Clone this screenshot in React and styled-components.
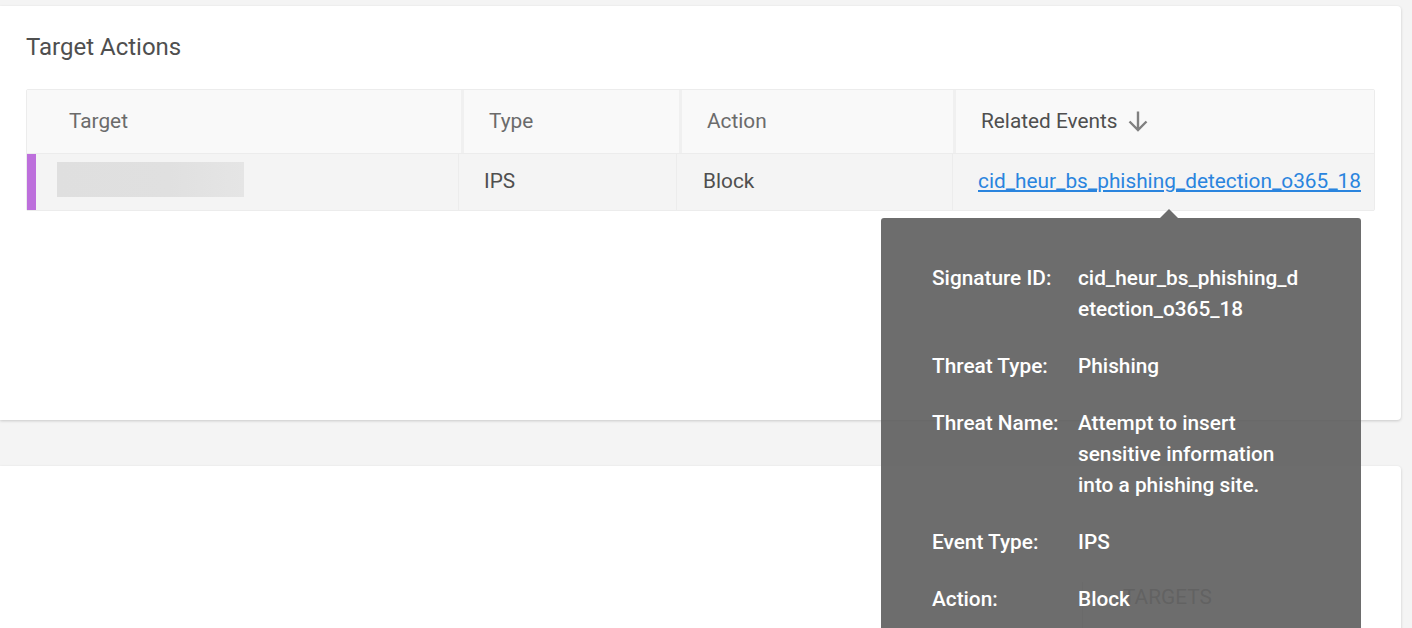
import React from "react";
import styled, { createGlobalStyle } from "styled-components";

const Global = createGlobalStyle`
  html, body { margin: 0; padding: 0; height: 628px; overflow: hidden; background: #f4f4f4; }
  body { font-family: Roboto, "Liberation Sans", sans-serif; }
`;

const Page = styled.div`
  display: flex;
  flex-direction: column;
  gap: 46px;
  padding: 6px 11px 0 0;
  height: 628px;
  box-sizing: border-box;
`;

const Card = styled.section`
  background: #fff;
  border-radius: 0 4px 4px 0;
  box-shadow: 0 1px 3px rgba(0, 0, 0, 0.18);
  box-sizing: border-box;
`;

const ActionsCard = styled(Card)`
  flex: none;
  height: 414px;
  padding: 26px 26px 0;
`;

const Title = styled.h2`
  margin: 0 0 27px;
  font-size: 24px;
  line-height: 30px;
  font-weight: 400;
  color: #4f4f4f;
`;

const Table = styled.div`
  position: relative;
  border: 1px solid #ececec;
  border-radius: 2px;
  width: 1349px;
  box-sizing: border-box;
`;

const HeaderRow = styled.div`
  display: grid;
  grid-template-columns: 437px 218px 274px 1fr;
  height: 63px;
  background: #f9f9f9;
  border-bottom: 1px solid #ececec;
`;

const HeaderCell = styled.div`
  display: flex;
  align-items: center;
  gap: 10px;
  padding-left: ${(p) => p.$indent}px;
  padding-bottom: 2px;
  border-right: ${(p) => (p.$last ? "0" : "3px solid #f0f0f0")};
  font-size: 20.8px;
  color: ${(p) => (p.$active ? "#4f4f4f" : "#6b6b6b")};
`;

const DataRow = styled.div`
  display: grid;
  grid-template-columns: 432px 218px 276px 1fr;
  height: 56px;
  background: #f4f4f4;
  font-size: 20.8px;
  color: #4f4f4f;
  box-shadow: 0 1px 0 #ececec;
`;

const DataCell = styled.div`
  display: flex;
  align-items: center;
  padding-left: ${(p) => p.$indent}px;
  padding-bottom: 2px;
  border-right: ${(p) => (p.$last ? "0" : "1px solid #ececec")};
`;

const TargetCell = styled(DataCell)`
  padding: 0;
  align-items: stretch;
`;

const Severity = styled.div`
  width: 9px;
  background: #bd6fdc;
`;

const Redacted = styled.div`
  width: 187px;
  height: 35px;
  margin: 8px 0 0 21px;
  background: linear-gradient(90deg, #dfdfdf 0%, #e0e0e0 60%, #e5e5e5 100%);
`;

const EventLink = styled.a`
  color: #2a84de;
  text-decoration: underline;
  white-space: nowrap;
`;

const Tooltip = styled.div`
  position: absolute;
  top: 128px;
  left: 854px;
  width: 480px;
  height: 460px;
  box-sizing: border-box;
  padding: 45px 54px 0 51px;
  background: rgba(93, 93, 93, 0.9);
  border-radius: 3px;
  z-index: 2;
  color: #fff;
  font-size: 20.8px;
  font-weight: 500;
  line-height: 31px;

  &::before {
    content: "";
    position: absolute;
    top: -9px;
    left: 279px;
    border-left: 9px solid transparent;
    border-right: 9px solid transparent;
    border-bottom: 9px solid #6d6d6d;
  }
`;

const TipRow = styled.div`
  display: grid;
  grid-template-columns: 146px 1fr;
  margin-bottom: 26px;
`;

const TipValue = styled.div`
  word-break: break-all;
`;

const TipWrapValue = styled.div`
  overflow-wrap: normal;
`;

const LowerCard = styled(Card)`
  flex: none;
  height: 200px;
  display: flex;
  justify-content: flex-start;
  padding: 116px 0 0 1082px;
`;

const Divider = styled.div`
  width: 1px;
  background: #e0e0e0;
  height: 100px;
`;

const SectionLabel = styled.div`
  margin-left: 40px;
  font-size: 20.8px;
  line-height: 30px;
  color: #8a8a8a;
`;

const ArrowDown = () => (
  <svg width="22" height="22" viewBox="0 0 22 22" fill="none" stroke="#808080" strokeWidth="2.4">
    <path d="M11 1.5v18M2.5 11.5l8.5 8.5 8.5-8.5" />
  </svg>
);

export default function App() {
  return (
    <>
      <Global />
      <Page>
        <ActionsCard>
          <Title>Target Actions</Title>
          <Table>
            <HeaderRow>
              <HeaderCell $indent={42}>Target</HeaderCell>
              <HeaderCell $indent={25}>Type</HeaderCell>
              <HeaderCell $indent={25}>Action</HeaderCell>
              <HeaderCell $indent={25} $last $active>
                Related Events <ArrowDown />
              </HeaderCell>
            </HeaderRow>
            <DataRow>
              <TargetCell>
                <Severity />
                <Redacted />
              </TargetCell>
              <DataCell $indent={25}>IPS</DataCell>
              <DataCell $indent={26}>Block</DataCell>
              <DataCell $indent={25} $last>
                <EventLink href="#">cid_heur_bs_phishing_detection_o365_18</EventLink>
              </DataCell>
            </DataRow>
            <Tooltip>
              <TipRow>
                <span>Signature ID:</span>
                <TipValue>cid_heur_bs_phishing_detection_o365_18</TipValue>
              </TipRow>
              <TipRow>
                <span>Threat Type:</span>
                <TipWrapValue>Phishing</TipWrapValue>
              </TipRow>
              <TipRow>
                <span>Threat Name:</span>
                <TipWrapValue>Attempt to insert sensitive information into a phishing site.</TipWrapValue>
              </TipRow>
              <TipRow>
                <span>Event Type:</span>
                <TipWrapValue>IPS</TipWrapValue>
              </TipRow>
              <TipRow>
                <span>Action:</span>
                <TipWrapValue>Block</TipWrapValue>
              </TipRow>
            </Tooltip>
          </Table>
        </ActionsCard>
        <LowerCard>
          <Divider />
          <SectionLabel>TARGETS</SectionLabel>
        </LowerCard>
      </Page>
    </>
  );
}
